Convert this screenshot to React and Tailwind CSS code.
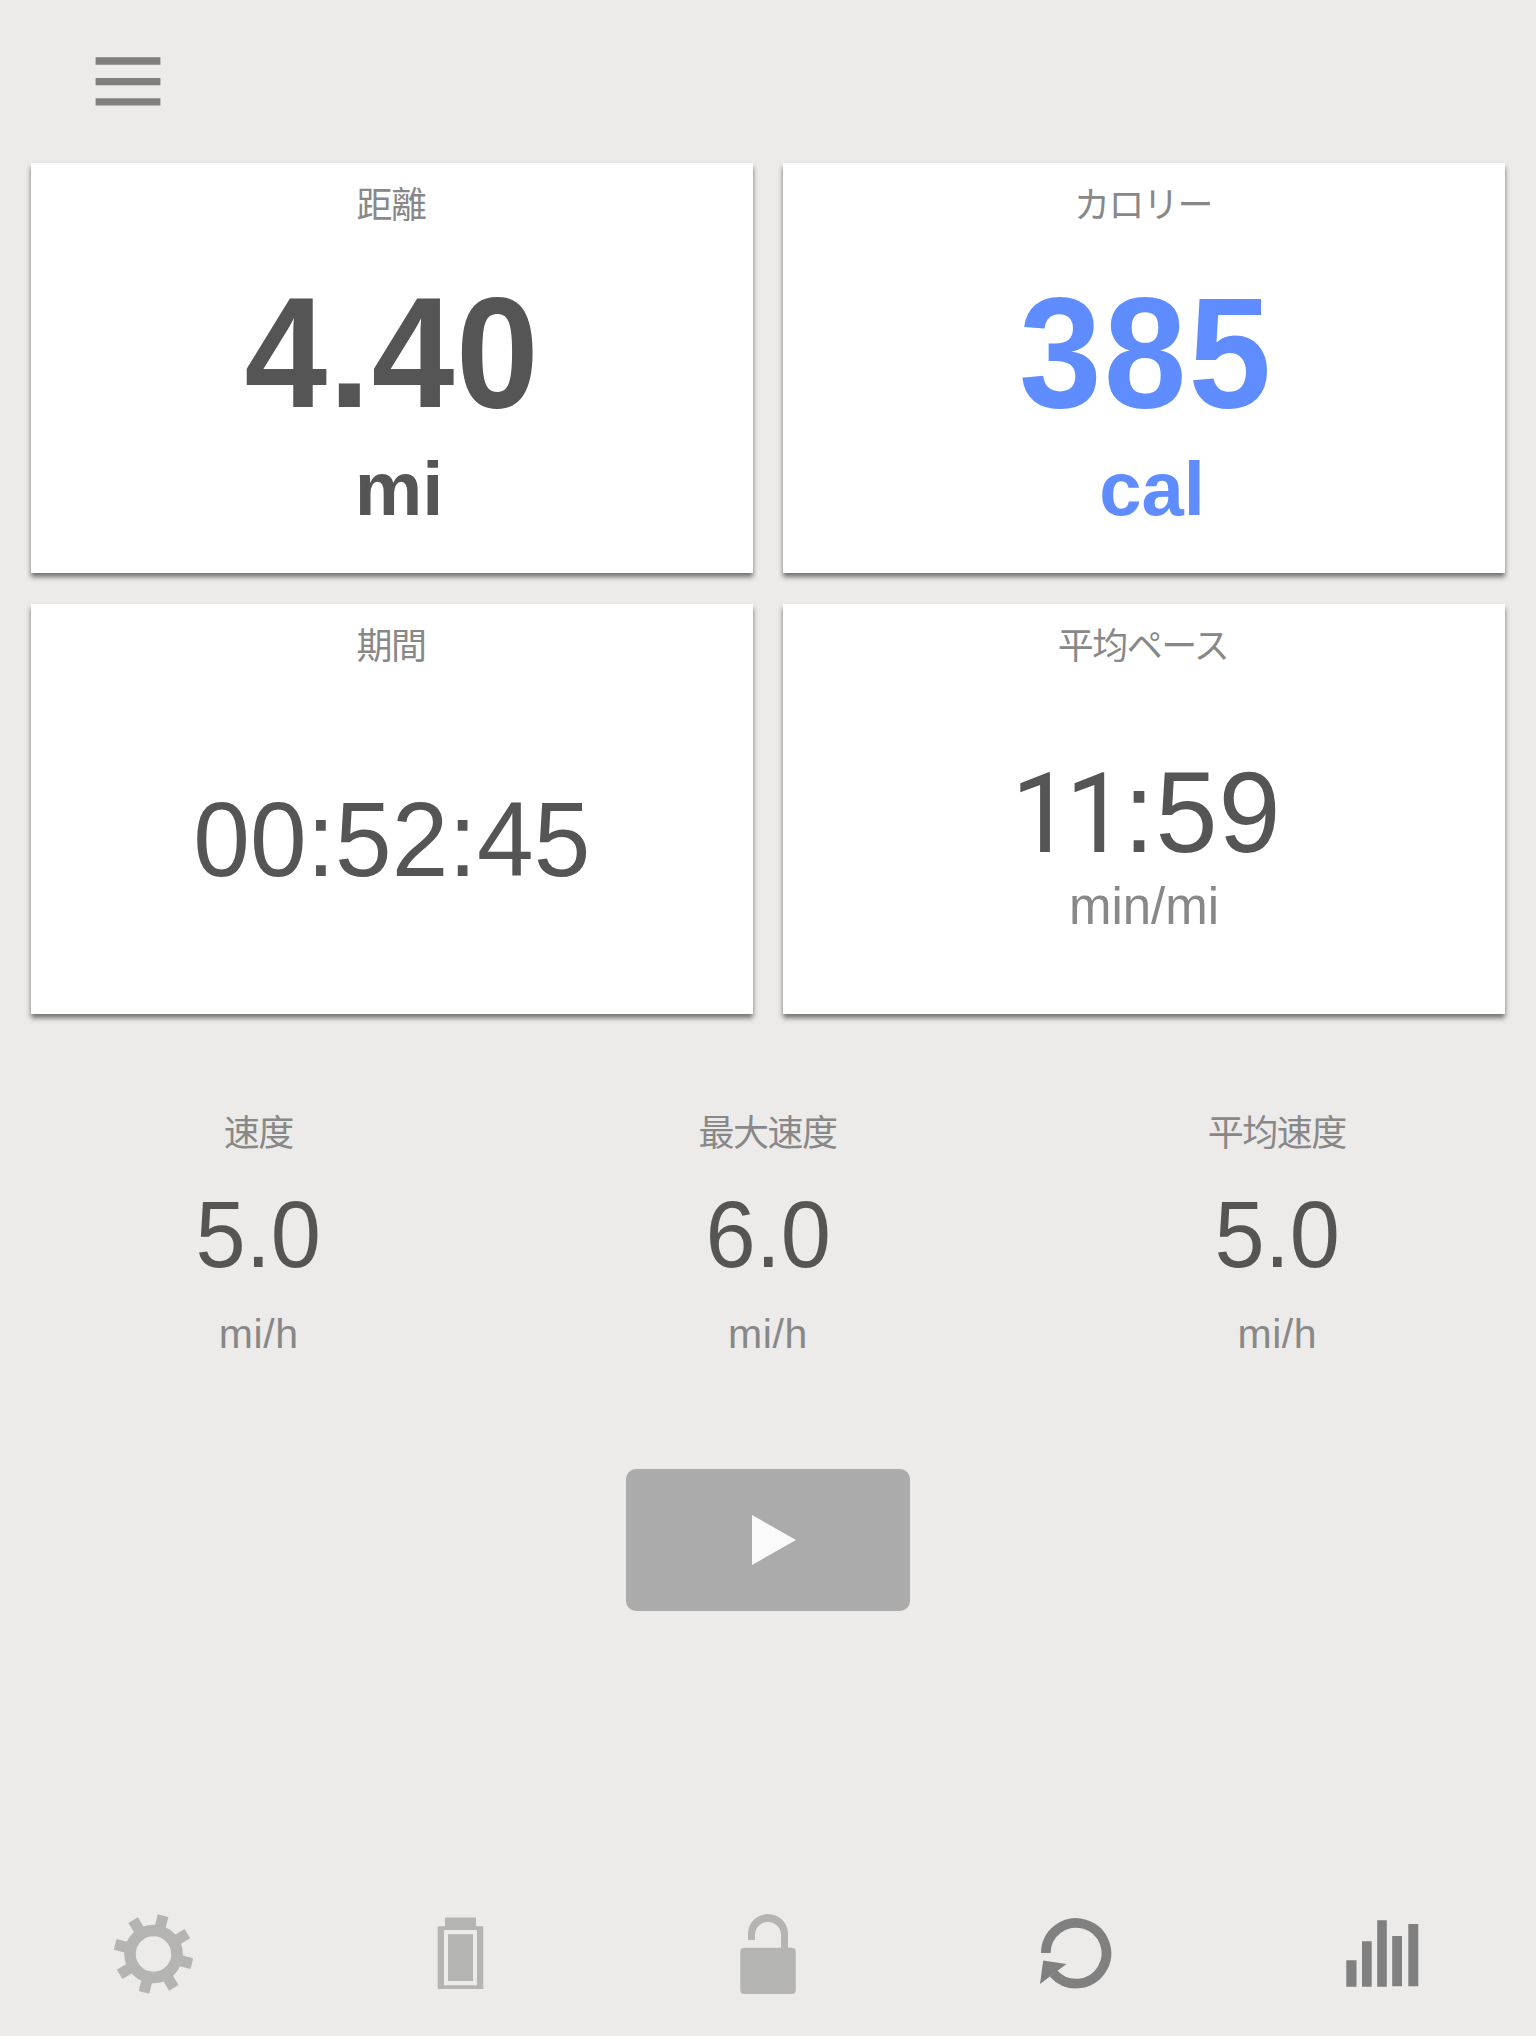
import React from 'react';

const speeds = [
  { label: '速度', value: '5.0', unit: 'mi/h' },
  { label: '最大速度', value: '6.0', unit: 'mi/h' },
  { label: '平均速度', value: '5.0', unit: 'mi/h' }
];

const gearTeeth = [14, 59, 104, 149, 194, 239, 284, 329];

const Card = ({ label, children }) => (
  <section className="h-[410px] bg-white flex flex-col items-center shadow-[0_4px_5px_rgba(0,0,0,0.52)]">
    <h2 className="mt-[17px] h-[52px] leading-[52px] text-[36px] tracking-[-1.5px] mr-[2px] text-[#888888]">{label}</h2>
    {children}
  </section>
);

const MenuIcon = () => (
  <svg className="w-[66px] h-[50px]" viewBox="0 0 66 50" fill="#808080">
    <path d="M.6.3h64.8v7.4H.6zM.6 20.9h64.8v7.3H.6zM.6 41.2h64.8v7.4H.6z" />
  </svg>
);

const GearIcon = () => (
  <svg className="w-[120px] h-[120px]" viewBox="90 1890 120 120" fill="#b4b4b2">
    <circle cx="153.5" cy="1954" r="23.5" fill="none" stroke="#b4b4b2" strokeWidth="11.6" />
    {gearTeeth.map((angle) => (
      <rect key={angle} x="148" y="1914.5" width="11" height="14" transform={`rotate(${angle} 153.5 1954)`} />
    ))}
  </svg>
);

const BatteryIcon = () => (
  <svg className="w-[120px] h-[120px]" viewBox="0 0 120 120" fill="#b4b4b2">
    <path fillRule="evenodd" d="M45 27.5h31v8.7h7.3v62.9H37.7V36.2H45zM44 40v55.3h33V40z" />
    <path d="M48 44.3h25V91H48z" />
  </svg>
);

const UnlockIcon = () => (
  <svg className="w-[120px] h-[120px]" viewBox="0 0 120 120" fill="#b4b4b2">
    <path d="M38 50v-6a20 20 0 0 1 40 0v14h-7V45a13 13 0 0 0-26 0v5z" />
    <rect x="30.3" y="57.7" width="55.5" height="46.3" rx="4" />
  </svg>
);

const ResetIcon = () => (
  <svg className="w-[120px] h-[120px]" viewBox="0 0 120 120" fill="#808080">
    <path d="M25.8 63A30.3 30.3 0 1 1 33.5 83.5" fill="none" stroke="#808080" strokeWidth="9.6" />
    <path d="M23.2 70.5 46.5 74 20 94z" />
  </svg>
);

const StatsIcon = () => (
  <svg className="w-[120px] h-[120px]" viewBox="10 0 120 120" fill="#808080">
    <path d="M26.3 70.3h10.2v26.5H26.3zM42 51.3h9.7v45.5H42zM57.2 30.3h9.6v66.5h-9.6zM72.2 46H82v50.3h-9.8zM88.3 34h10v62.3h-10z" />
  </svg>
);

const App = () => {
  return (
    <main className="h-[2036px] w-[1536px] overflow-hidden bg-[#ecebe9] flex flex-col font-['Liberation_Sans','Noto_Sans_CJK_SC',sans-serif] text-[#555555]">
      <header className="h-[163px] shrink-0 pl-[95px] pt-[57px]">
        <button className="block" aria-label="menu">
          <MenuIcon />
        </button>
      </header>

      <div className="grid grid-cols-2 gap-x-[30px] gap-y-[31px] px-[31px] shrink-0">
        <Card label="距離">
          <div className="mt-[40px] h-[160px] leading-[160px] text-[158px] font-bold tracking-[1.8px] scale-x-[0.94]">4.40</div>
          <div className="mt-[17px] ml-[14px] h-[80px] leading-[80px] text-[76px] font-bold">mi</div>
        </Card>
        <Card label="カロリー">
          <div className="mt-[40px] ml-[5px] h-[160px] leading-[160px] text-[158px] font-bold tracking-[2.2px] scale-x-[0.94] text-[#5f8dff]">385</div>
          <div className="mt-[17px] ml-[16px] h-[80px] leading-[80px] text-[76px] font-bold text-[#5f8dff]">cal</div>
        </Card>
        <Card label="期間">
          <div className="mt-[107px] h-[120px] leading-[120px] text-[105px] tracking-[0.1px] scale-x-[0.97]">00:52:45</div>
        </Card>
        <Card label="平均ペース">
          <div className="mt-[74px] ml-[4px] h-[130px] leading-[130px] text-[115px] tracking-[1px] scale-x-[0.97]">
            <span className="font-[Roboto] text-[112px] tracking-[-7px] mr-[4px]">11</span>:59
          </div>
          <div className="h-[60px] leading-[60px] text-[51px] text-[#888888]">min/mi</div>
        </Card>
      </div>

      <div className="grid grid-cols-3 mt-[94px] px-[4px] shrink-0">
        {speeds.map((item) => (
          <div key={item.label} className="flex flex-col items-center">
            <span className="h-[52px] leading-[52px] text-[36px] tracking-[-1.5px] mr-[1px] text-[#888888]">{item.label}</span>
            <span className="mt-[25px] h-[100px] leading-[100px] text-[94px] scale-x-[0.96]">{item.value}</span>
            <span className="mt-[24px] h-[50px] leading-[50px] text-[41px] tracking-[0.6px] text-[#888888]">{item.unit}</span>
          </div>
        ))}
      </div>

      <button className="mt-[110px] mx-auto w-[284px] h-[142px] shrink-0 rounded-[10px] bg-[#ababab] flex items-center justify-center" aria-label="start">
        <svg className="w-[44px] h-[50px] ml-[12px]" viewBox="0 0 44 50" fill="#fafafa">
          <path d="M0 0 44 25 0 50z" />
        </svg>
      </button>

      <footer className="mt-auto mb-[26px] pl-[90px] flex gap-[190px] shrink-0">
        <GearIcon />
        <BatteryIcon />
        <UnlockIcon />
        <ResetIcon />
        <StatsIcon />
      </footer>
    </main>
  );
};

export default App;
